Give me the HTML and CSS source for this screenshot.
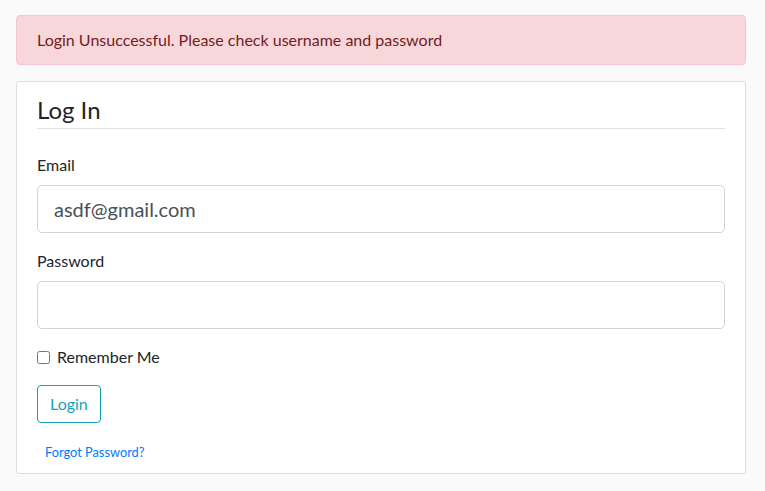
FILE: index.html
```html
<!DOCTYPE html>
<html lang="en">
<head>
<meta charset="utf-8">
<title>Login</title>
<link rel="stylesheet" href="styles.css">
</head>
<body>
<main class="page">
  <div class="alert">Login Unsuccessful. Please check username and password</div>
  <div class="content-section">
    <form class="login-form" action="#">
      <fieldset class="fields">
        <legend class="legend">Log In</legend>
        <div class="form-group">
          <label class="label" for="email">Email</label>
          <input class="form-control" id="email" type="text" value="asdf@gmail.com">
        </div>
        <div class="form-group">
          <label class="label" for="password">Password</label>
          <input class="form-control" id="password" type="password">
        </div>
        <div class="form-check">
          <input class="check-input" id="remember" type="checkbox">
          <label class="check-label" for="remember">Remember Me</label>
        </div>
      </fieldset>
      <div class="form-group">
        <button class="btn" type="button">Login</button>
      </div>
      <div class="forgot-row">
        <small class="small"><a class="link" href="#">Forgot Password?</a></small>
      </div>
    </form>
  </div>
</main>
</body>
</html>
```
FILE: styles.css
```css
* { box-sizing: border-box; }
html, body { margin: 0; padding: 0; }
body {
  background: #fafafa;
  color: #212529;
  font-family: "Lato", "Noto Sans", "Liberation Sans", sans-serif;
  font-size: 16px;
  line-height: 1.5;
}
.page {
  padding: 15px 19px 0 16px;
}
.alert {
  background: #f8d7da;
  border: 1px solid #f5c6cb;
  color: #721c24;
  border-radius: 4px;
  padding: 12px 20px;
  margin-bottom: 16px;
}
.content-section {
  background: #fff;
  border: 1px solid #ddd;
  border-radius: 3px;
  padding: 10px 20px;
}
.login-form { margin: 0; }
.fields {
  border: 0;
  margin: 0;
  padding: 0;
  min-width: 0;
}
.legend {
  display: block;
  width: 100%;
  padding: 0;
  font-size: 24px;
  line-height: 1.5;
  border-bottom: 1px solid #dee2e6;
  margin-bottom: 24px;
}
.form-group {
  margin-bottom: 16px;
}
.label {
  display: block;
  margin-bottom: 8px;
}
.form-control {
  display: block;
  width: 100%;
  height: 48px;
  padding: 8px 16px;
  font-family: inherit;
  font-size: 20px;
  line-height: 1.5;
  color: #495057;
  background: #fff;
  border: 1px solid #ced4da;
  border-radius: 5px;
  outline: none;
}
.form-check {
  display: flex;
  align-items: center;
  margin-bottom: 16px;
}
.check-input {
  width: 13px;
  height: 13px;
  margin: 0 7px 0 0;
}
.btn {
  font-family: inherit;
  font-size: 16px;
  line-height: 1.5;
  color: #17a2b8;
  background: transparent;
  border: 1px solid #17a2b8;
  border-radius: 4px;
  padding: 6px 12px;
  cursor: pointer;
}
.forgot-row {
  padding-left: 8px;
}
.small {
  font-size: 12.8px;
  color: #6c757d;
}
.link {
  color: #007bff;
  text-decoration: none;
}
```
